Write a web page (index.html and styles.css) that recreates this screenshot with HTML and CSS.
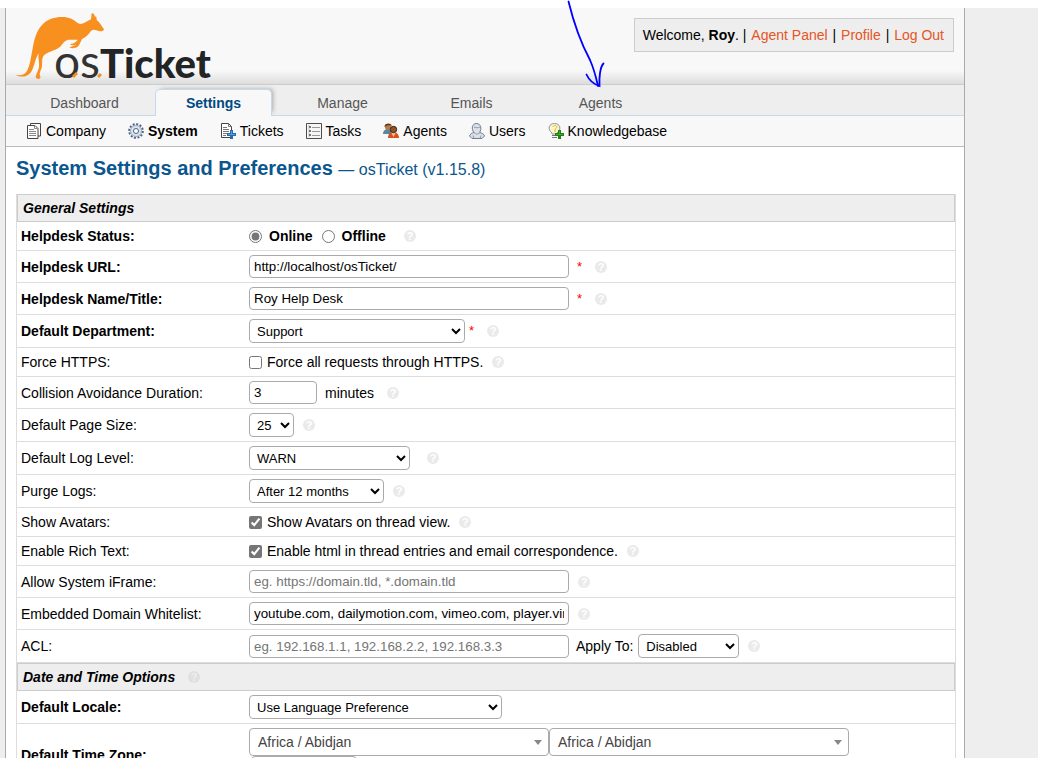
FILE: index.html
```html
<!DOCTYPE html>
<html lang="en">
<head>
<meta charset="utf-8">
<title>osTicket :: System Settings and Preferences</title>
<link rel="stylesheet" href="styles.css">
</head>
<body>
<div class="page">
  <header class="header">
    <a class="logo" href="#" aria-label="osTicket">
      <svg width="220" height="74" viewBox="0 0 220 74">
        <g transform="translate(-14 -10) scale(.3333)">
          <path fill="#f7901e" d="M45 224C58 227 74 226 81 213C91 194 92 176 97 151C102 120 108 95 126 75C148 50 190 47 214 56C224 60 230 69 240 72C252 71 262 62 271 59C276 56 273 45 275 41C279 37 283 43 285 50C290 47 290 54 290 60C300 67 304 77 312 88C310 96 299 95 289 91C282 88 277 88 272 94C265 104 258 113 246 117C242 124 240 135 232 141C226 145 214 146 208 142C216 140 224 138 229 133C220 138 213 136 210 132C220 132 229 126 233 119C222 120 211 119 204 119C190 123 187 137 174 145C157 155 139 157 130 168C124 181 128 191 125 204C121 215 116 222 122 232C119 239 111 238 107 232C108 221 115 213 117 201C119 185 113 175 116 160C108 171 105 190 98 207C88 231 67 235 45 224Z"/>
        </g>
        <text class="logo-os" x="40" y="68">os</text>
        <text class="logo-ticket" x="86" y="68">Ticket</text>
        <path d="M59 67L63 63M84 67L87 64" stroke="#f7901e" stroke-width="3"/>
      </svg>
    </a>
    <p class="welcome">Welcome, <strong>Roy</strong>. | <a href="#">Agent Panel</a> | <a href="#">Profile</a> | <a href="#">Log Out</a></p>
  </header>

  <nav class="tabs">
    <a href="#">Dashboard</a>
    <a href="#" class="active">Settings</a>
    <a href="#">Manage</a>
    <a href="#">Emails</a>
    <a href="#">Agents</a>
  </nav>

  <nav class="subnav">
    <a href="#"><svg width="16" height="16" viewBox="0 0 16 16"><path d="M4.500 .5h10v12.500h-10z" fill="#fff" stroke="#444"/><path d="M1.500 2.500h7.500l3 3v10H1.500z" fill="#fff" stroke="#444"/><path d="M8.500 2.500v3h3M3 6.500h5M3 8.500h7M3 10.500h7M3 12.500h7" fill="none" stroke="#888"/></svg>Company</a>
    <a href="#" class="active"><svg width="16" height="16" viewBox="0 0 16 16"><circle cx="8" cy="8" r="6.800" fill="none" stroke="#4b6488" stroke-width="2" stroke-dasharray="2 1.560"/><circle cx="8" cy="8" r="5.500" fill="#dde3ea" stroke="#9aa9bb"/><circle cx="8" cy="8" r="2.500" fill="#fff" stroke="#4b6488"/></svg>System</a>
    <a href="#"><svg width="16" height="16" viewBox="0 0 16 16"><path d="M1.500 .5h7l3 3v11h-10z" fill="#fff" stroke="#444"/><path d="M8.500 .5v3h3M3 4.500h4M3 6.500h6M3 8.500h6M3 10.500h4M3 12.500h3" fill="none" stroke="#777"/><path d="M10 7h3v3h3v3h-3v3h-3v-3H7v-3h3z" fill="#2b69ad"/><path d="M11 8h1v3h3v1H8v-1h3z" fill="#5e9bd8"/></svg>Tickets</a>
    <a href="#"><svg width="16" height="16" viewBox="0 0 16 16"><path d="M.5 .5h15v15H.5z" fill="#f6f6f6" stroke="#4d4d4d"/><path d="M2 2h2v12H2z" fill="#ddd"/><path d="M3 4h2M3 8h2M3 12h2" stroke="#777" stroke-width="2"/><path d="M6 4.500h8M6 8.500h8M6 12.500h8" stroke="#999"/></svg>Tasks</a>
    <a href="#"><svg width="16" height="16" viewBox="0 0 16 16"><path d="M0 11C0 7 3 6 5 6s4 1 4 5z" fill="#5389a7"/><circle cx="5" cy="4" r="3" fill="#bd7a43"/><path d="M1.500 4C1 0 8-1 9 3C7 2 4 2 1.500 4z" fill="#60391f"/><path d="M5 15c0-4 2-6 5-6s6 2 6 6z" fill="#d9511b"/><path d="M8 9l2.500 5L13 9z" fill="#f8c397"/><circle cx="10.500" cy="6.500" r="3.200" fill="#8b5429" stroke="#3c281b"/></svg>Agents</a>
    <a href="#"><svg width="16" height="16" viewBox="0 0 16 16"><path d="M.5 13C1 11 3 10 5 9.500C2 6 3 .5 7.500 .5S13 6 10.500 9.500C13 10 15 11 15.500 13L13 15.500H3z" fill="#dde1e7" stroke="#6b7d96"/><path d="M5 4c2 1 4 1 6 0M5 9.500c2 2 4 2 6 0M4 12.500l1 3M12 12.500l-1 3" fill="none" stroke="#8b99ac"/></svg>Users</a>
    <a href="#"><svg width="16" height="16" viewBox="0 0 16 16"><path d="M4 10C-1 6 1 .5 6.500 .5S14 6 9 10v1H4z" fill="#fff6c7" stroke="#8397ae"/><path d="M5 4c0-2 4-2 4 0c0 1-2 1-2 3v2" fill="none" stroke="#e4ae38"/><path d="M4 12.500h5M4 14.500h5" stroke="#777"/><path d="M10 7h3v3h3v3h-3v3h-3v-3H7v-3h3z" fill="#238016"/><path d="M11 8h1v3h3v1H8v-1h3z" fill="#42a82d"/></svg>Knowledgebase</a>
  </nav>

  <main class="content">
    <h1 class="title">System Settings and Preferences <small>— osTicket (v1.15.8)</small></h1>
    <form class="settings">
      <h2 class="section">General Settings</h2>
      <div class="row required"><span class="name">Helpdesk Status:</span>
        <div class="field status"><label><input type="radio" name="status" checked>Online</label><label><input type="radio" name="status">Offline</label><a class="help" href="#">?</a></div></div>
      <div class="row required"><label class="name" for="url">Helpdesk URL:</label>
        <div class="field"><input class="text" id="url" type="text" value="http://localhost/osTicket/"><span class="star">*</span><a class="help far" href="#">?</a></div></div>
      <div class="row required"><label class="name" for="title">Helpdesk Name/Title:</label>
        <div class="field"><input class="text" id="title" type="text" value="Roy Help Desk"><span class="star">*</span><a class="help far" href="#">?</a></div></div>
      <div class="row required"><label class="name" for="dept">Default Department:</label>
        <div class="field"><select class="dept" id="dept"><option>Support</option></select><span class="star near">*</span><a class="help far" href="#">?</a></div></div>
      <div class="row"><span class="name">Force HTTPS:</span>
        <div class="field"><label class="check"><input type="checkbox">Force all requests through HTTPS.</label><a class="help" href="#">?</a></div></div>
      <div class="row"><label class="name" for="lock">Collision Avoidance Duration:</label>
        <div class="field"><input class="text short" id="lock" type="text" value="3"><span class="unit">minutes</span><a class="help far" href="#">?</a></div></div>
      <div class="row"><label class="name" for="size">Default Page Size:</label>
        <div class="field"><select class="size" id="size"><option>25</option></select><a class="help" href="#">?</a></div></div>
      <div class="row"><label class="name" for="log">Default Log Level:</label>
        <div class="field"><select class="log" id="log"><option>WARN</option></select><a class="help wide" href="#">?</a></div></div>
      <div class="row"><label class="name" for="purge">Purge Logs:</label>
        <div class="field"><select class="purge" id="purge"><option>After 12 months</option></select><a class="help" href="#">?</a></div></div>
      <div class="row"><span class="name">Show Avatars:</span>
        <div class="field"><label class="check"><input type="checkbox" checked>Show Avatars on thread view.</label><a class="help" href="#">?</a></div></div>
      <div class="row"><span class="name">Enable Rich Text:</span>
        <div class="field"><label class="check"><input type="checkbox" checked>Enable html in thread entries and email correspondence.</label><a class="help" href="#">?</a></div></div>
      <div class="row"><label class="name" for="iframe">Allow System iFrame:</label>
        <div class="field"><input class="text" id="iframe" type="text" placeholder="eg. https://domain.tld, *.domain.tld"><a class="help" href="#">?</a></div></div>
      <div class="row"><label class="name" for="embed">Embedded Domain Whitelist:</label>
        <div class="field"><input class="text" id="embed" type="text" value="youtube.com, dailymotion.com, vimeo.com, player.vimeo.com"><a class="help" href="#">?</a></div></div>
      <div class="row"><label class="name" for="acl">ACL:</label>
        <div class="field"><input class="text" id="acl" type="text" placeholder="eg. 192.168.1.1, 192.168.2.2, 192.168.3.3"><label class="apply" for="apply">Apply To:</label><select class="acl" id="apply"><option>Disabled</option></select><a class="help" href="#">?</a></div></div>

      <h2 class="section">Date and Time Options<a class="help far" href="#">?</a></h2>
      <div class="row required"><label class="name" for="locale">Default Locale:</label>
        <div class="field"><select class="locale" id="locale"><option>Use Language Preference</option></select></div></div>
      <div class="row required"><label class="name" for="zone">Default Time Zone:</label>
        <div class="field zones">
          <div class="combos">
            <button type="button" class="combo" id="zone">Africa / Abidjan</button>
            <button type="button" class="combo">Africa / Abidjan</button>
          </div>
          <button type="button" class="detect">Auto Detect</button>
        </div></div>
    </form>
  </main>
</div>
<svg class="pointer" width="50" height="90" viewBox="0 0 50 90" aria-hidden="true"><path d="M8.500 1.500C14 24 22 45 30 60C34 69 36 77 38 86M26.500 74.500C29 80 33 84 39.500 86C39 78 40 67 43.500 63.500" fill="none" stroke="#00f" stroke-width="1.800" stroke-linecap="round"/></svg>
</body>
</html>
```
FILE: styles.css
```css
* { box-sizing: border-box; }
html { background: #eee; }
body {
  position: relative;
  margin: 0;
  padding-top: 8px;
  background: linear-gradient(#fff, #fff) top / 100% 8px no-repeat;
  color: #000;
  font: 14px/20px "Liberation Sans", Arial, sans-serif;
}
a { color: #e65524; text-decoration: none; }
.page {
  max-width: 960px;
  margin-left: 5px;
  border: solid #aaa;
  border-width: 0 1px;
  background: #fff;
}
.header {
  display: flex;
  justify-content: space-between;
  align-items: flex-start;
  height: 77px;
  padding: 2px 10px 0 8px;
  border-bottom: 1px solid #ccc;
  background: linear-gradient(#f8f8f8 82%, #ddd);
}
.logo svg { display: block; }
.logo-os {
  fill: #333;
  font: 46px Lato, sans-serif;
}
.logo-ticket {
  fill: #222425;
  font: 900 40px Lato, sans-serif;
}
.welcome {
  margin: 8px 0 0;
  padding: 6px 8px;
  border: 1px solid #ccc;
  background: #eee;
}
.welcome a { margin: 0 1px; }
.tabs {
  display: flex;
  gap: 12px;
  padding: 4px 20px 0;
  background: linear-gradient(#c5d9ec, #c5d9ec) bottom / 100% 1px no-repeat #eee;
}
.tabs a {
  width: 117px;
  padding: 3px 0;
  border: 1px solid transparent;
  border-bottom: 0;
  color: #555;
  text-align: center;
}
.tabs .active {
  border-color: #c5d9ec;
  border-radius: 5px 5px 0 0;
  background: #f8f8f8;
  box-shadow: 3px -2px 4px -2px #aaa;
  color: #004a80;
  font-weight: bold;
}
.subnav {
  display: flex;
  gap: 22px;
  padding: 5px 20px;
  border-bottom: 1px solid #bbb;
  background: #f8f8f8;
}
.subnav a {
  display: flex;
  align-items: center;
  gap: 4px;
  color: #000;
}
.subnav .active { font-weight: bold; }
.content { padding: 9px 8px 0 10px; }
.title {
  margin: 0 0 12px;
  color: #0a568e;
  font-size: 20px;
  line-height: 24px;
}
.title small { font-size: 16px; font-weight: normal; }
.settings {
  border: solid #ddd;
  border-width: 0 1px;
}
.section {
  display: flex;
  align-items: center;
  margin: 0;
  padding: 3px 5px;
  border: 1px solid #ccc;
  background: #eee;
  font: italic bold 14px/20px "Liberation Sans", Arial, sans-serif;
}
.row {
  display: flex;
  align-items: center;
  padding: 4px;
  border-bottom: 1px solid #ddd;
}
.name { flex: 0 0 228px; }
.required .name, .status { font-weight: bold; }
.field { display: flex; align-items: center; }
.status label { display: flex; align-items: center; gap: 7px; margin-right: 9px; }
.check { display: flex; align-items: center; gap: 5px; }
input[type="radio"], input[type="checkbox"] {
  width: 13px;
  height: 13px;
  margin: 0;
  accent-color: #767676;
}
.text, select {
  border: 1px solid #aaa;
  border-radius: 4px;
  background-color: #fff;
  color: #000;
  font-family: "Liberation Sans", Arial, sans-serif;
}
.text { width: 320px; height: 23px; padding: 0 4px; }
.text::placeholder { color: #757575; }
.short { width: 68px; }
select { height: 24px; padding: 0 0 0 3px; font-size: 13px; }
.dept { width: 216px; }
.size { width: 45px; }
.log { width: 161px; }
.purge { width: 135px; }
.acl { width: 101px; }
.locale { width: 253px; }
.star { margin-left: 8px; color: #f00; font-size: 13px; }
.near { margin-left: 4px; }
.unit { margin-left: 8px; }
.apply { margin: 0 5px 0 7px; }
.help {
  width: 12px;
  height: 12px;
  margin-left: 9px;
  border-radius: 50%;
  background: #eaeaea;
  color: #fff;
  font: bold 11px/12px "Liberation Sans", Arial, sans-serif;
  text-align: center;
}
.far { margin-left: 13px; }
.wide { margin-left: 17px; }
.section .help { background: #e0e0e0; color: #eee; }
.zones { flex-direction: column; align-items: flex-start; }
.combos { display: flex; }
.combo {
  width: 300px;
  height: 28px;
  padding: 0 8px;
  border: 1px solid #aaa;
  border-radius: 4px;
  background: #fff;
  color: #444;
  font: 14px "Liberation Sans", Arial, sans-serif;
  display: flex;
  align-items: center;
  justify-content: space-between;
}
.combo::after {
  border: 4px solid transparent;
  border-top: 5px solid #888;
  border-bottom: 0;
  margin-right: -2px;
  content: "";
}
.detect {
  width: 106px;
  height: 26px;
  margin-left: 2px;
  border: 1px solid #aaa;
  border-radius: 4px;
  background: #fff;
  font: 13px "Liberation Sans", Arial, sans-serif;
}
.pointer {
  position: absolute;
  top: 0;
  left: 560px;
  pointer-events: none;
}
```
